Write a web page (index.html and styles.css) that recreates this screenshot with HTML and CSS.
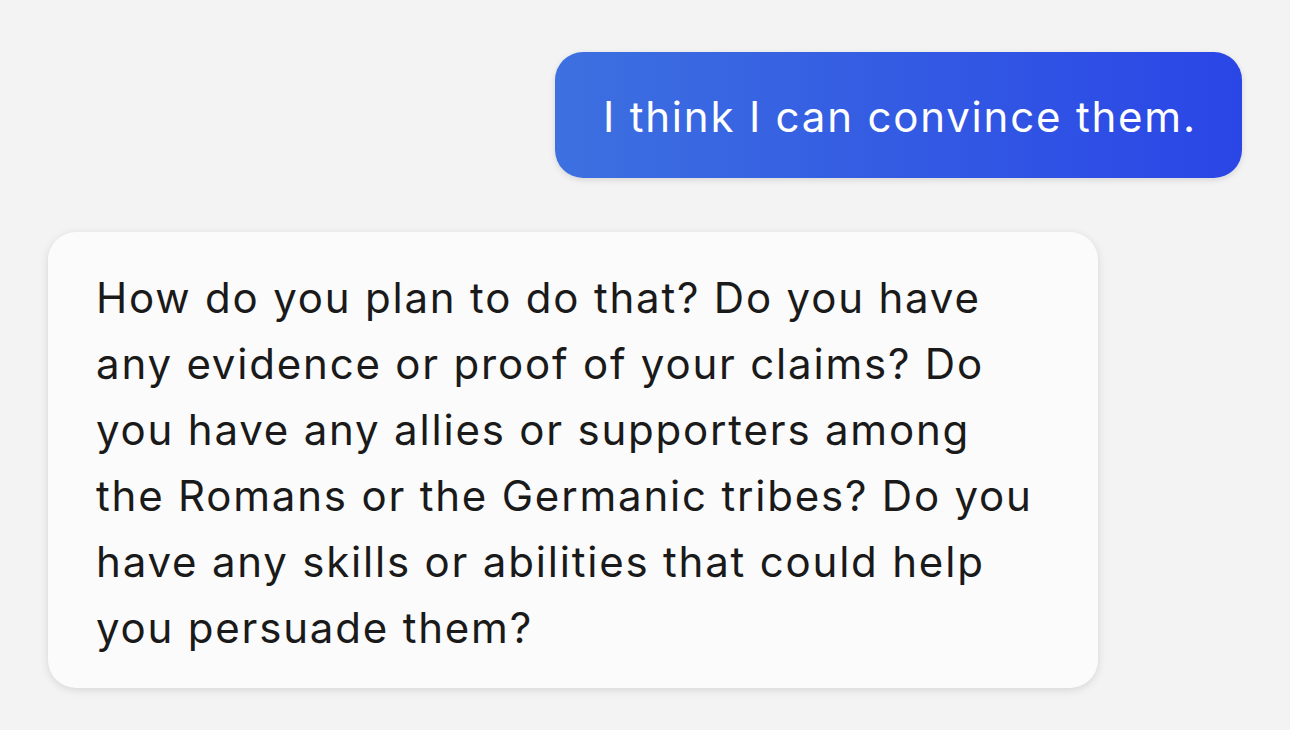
FILE: index.html
```html
<!DOCTYPE html>
<html>
<head>
<meta charset="utf-8">
<link rel="stylesheet" href="styles.css">
</head>
<body>
<div class="chat">
  <div class="row row-user">
    <div class="bubble bubble-user">I think I can convince them.</div>
  </div>
  <div class="row row-bot">
    <div class="bubble bubble-bot">How do you plan to do that? Do you have<br>any evidence or proof of your claims? Do<br>you have any allies or supporters among<br>the Romans or the Germanic tribes? Do you<br>have any skills or abilities that could help<br>you persuade them?</div>
  </div>
</div>
</body>
</html>
```

FILE: styles.css
```css
html, body {
  margin: 0;
  padding: 0;
  background: #f3f3f3;
  width: 1290px;
  height: 730px;
  overflow: hidden;
}
.chat {
  display: flex;
  flex-direction: column;
  gap: 54px;
  padding: 52px 48px 0 48px;
  font-family: Inter, "Noto Sans", sans-serif;
  font-size: 42px;
  line-height: 66px;
  letter-spacing: 1.8px;
}
.row {
  display: flex;
}
.row-user {
  justify-content: flex-end;
}
.row-bot {
  justify-content: flex-start;
}
.bubble {
  border-radius: 28px;
  white-space: nowrap;
}
.bubble-user {
  box-sizing: border-box;
  width: 687px;
  height: 126px;
  background: linear-gradient(90deg, #3d70e0 0%, #2a46e6 100%);
  color: #ffffff;
  padding: 32px 0 28px 48px;
  box-shadow: 0 2px 6px rgba(0,0,0,0.12);
}
.bubble-bot {
  box-sizing: border-box;
  background: #fbfbfb;
  color: #1a1a1a;
  width: 1050px;
  height: 456px;
  padding: 33px 0 0 48px;
  box-shadow: 0 2px 8px rgba(0,0,0,0.12);
}
```
